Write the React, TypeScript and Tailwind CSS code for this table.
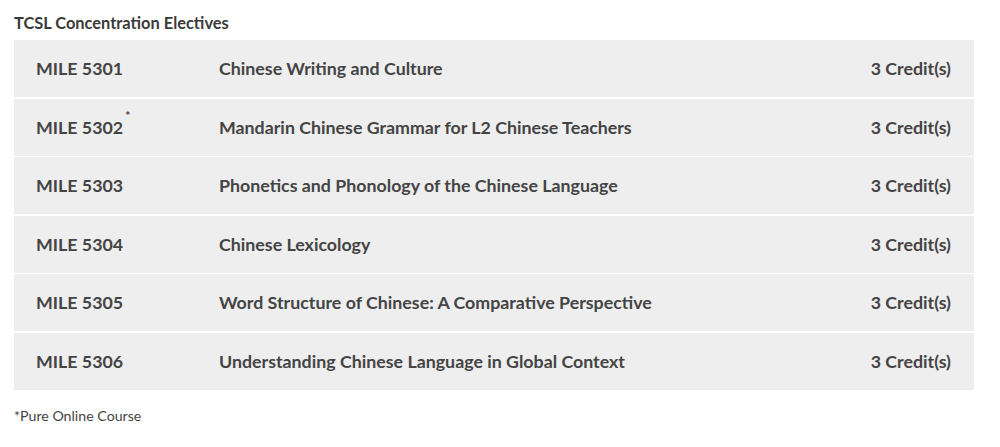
const courses = [
  { code: 'MILE 5301', title: 'Chinese Writing and Culture', online: false },
  { code: 'MILE 5302', title: 'Mandarin Chinese Grammar for L2 Chinese Teachers', online: true },
  { code: 'MILE 5303', title: 'Phonetics and Phonology of the Chinese Language', online: false },
  { code: 'MILE 5304', title: 'Chinese Lexicology', online: false },
  { code: 'MILE 5305', title: 'Word Structure of Chinese: A Comparative Perspective', online: false },
  { code: 'MILE 5306', title: 'Understanding Chinese Language in Global Context', online: false },
];

export default function App() {
  return (
    <div className="h-[447px] w-[1000px] bg-white px-[14px] pt-[12px] font-['Lato',sans-serif] text-[#444]">
      <h2 className="text-[16.4px] font-bold leading-[21px] text-[#3a3a3a]">TCSL Concentration Electives</h2>
      <div className="mt-[7px] flex w-[960px] flex-col gap-[1.5px]">
        {courses.map(c => (
          <div key={c.code} className="flex h-[57px] items-center bg-[#eeeeee] pl-[22px] pr-[23px] text-[17.8px] font-bold">
            <div className="relative w-[183px]">
              {c.code}
              {c.online && <sup className="absolute top-[2px] ml-[2px] text-[12px] font-bold">*</sup>}
            </div>
            <div className="flex-1">{c.title}</div>
            <div className="text-right">3 Credit(s)</div>
          </div>
        ))}
      </div>
      <p className="mt-[15px] text-[14.2px] text-[#444]">*Pure Online Course</p>
    </div>
  );
}
